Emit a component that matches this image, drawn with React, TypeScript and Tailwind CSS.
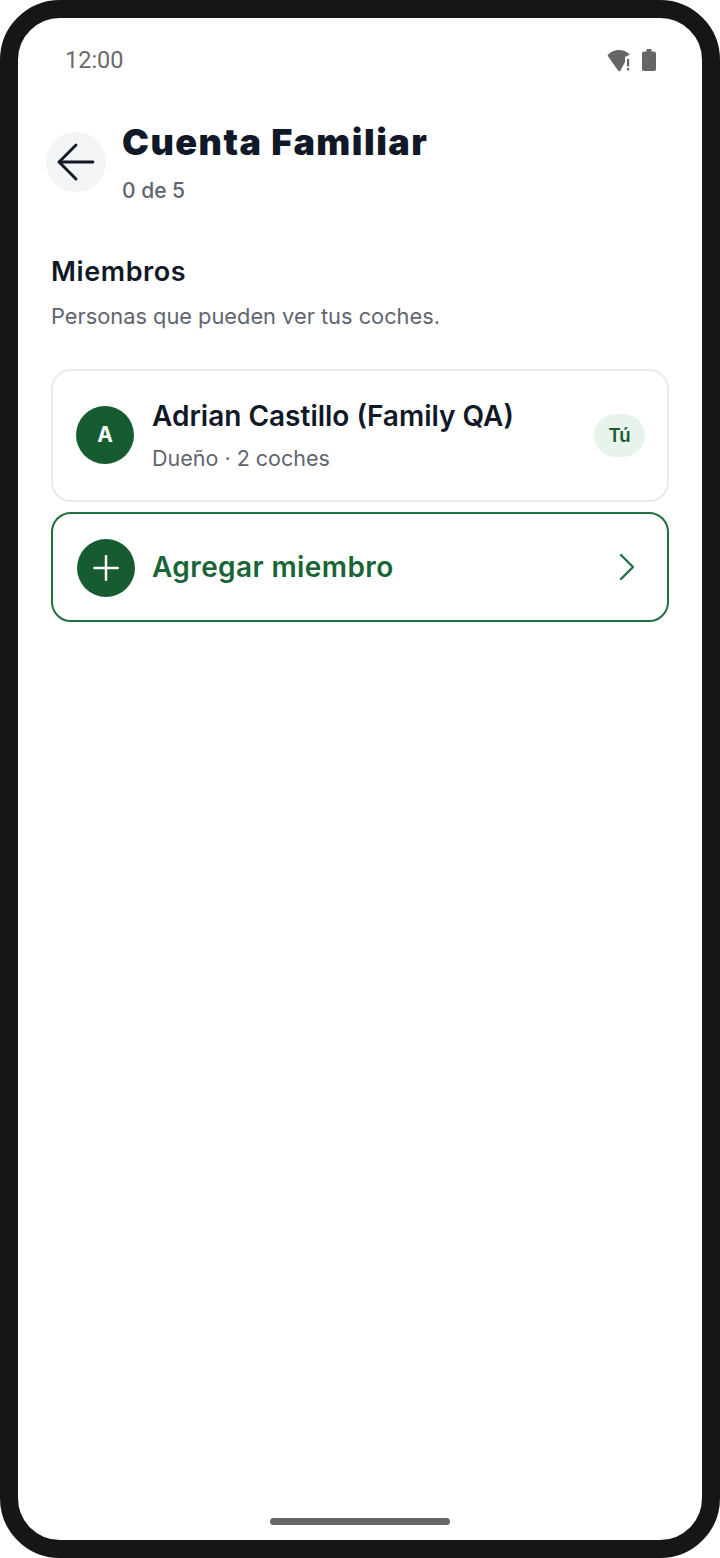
import { ArrowLeft, ChevronRight, Plus } from "lucide-react";

const sans = "font-['Inter','Noto_Sans',sans-serif]";

function StatusBar() {
  return (
    <div className="flex items-center justify-between h-[28px] pl-[47px] pr-[46px] mt-[28px]">
      <span className="font-['Roboto',sans-serif] text-[23.5px] leading-[28px] text-[#6b6b6b]">12:00</span>
      <div className="flex items-center gap-[9px]">
        <svg width="26" height="24" viewBox="0 0 26 24">
          <path d="M0.5 7.5C3.5 3.5 8 2 12 2c4 0 7.500 1.300 11 4.500l-5 2.500v5l-4.500 8.500a1.500 1.500 0 0 1-2.500 0Z" fill="#666666" />
          <rect x="20" y="11" width="2.200" height="7.500" fill="#666666" />
          <rect x="20" y="20" width="2.200" height="2.500" fill="#666666" />
        </svg>
        <svg width="14" height="22" viewBox="0 0 14 22">
          <path d="M4.500 0h5v2.500H12a2 2 0 0 1 2 2V20a2 2 0 0 1-2 2H2a2 2 0 0 1-2-2V4.500a2 2 0 0 1 2-2h2.500Z" fill="#666666" />
        </svg>
      </div>
    </div>
  );
}

export default function App() {
  return (
    <div className={`w-[720px] h-[1558px] bg-white ${sans}`}>
      <div className="w-full h-full border-[18px] border-[#151616] rounded-[60px] bg-white flex flex-col">
        <StatusBar />

        {/* Header */}
        <div className="flex items-start pl-[28px] mt-[45px]">
          <div className="w-[60px] h-[60px] mt-[13px] rounded-full bg-[#f3f4f6] flex items-center justify-center shrink-0">
            <ArrowLeft size={58} strokeWidth={1.200} className="text-[#111827]" />
          </div>
          <div className="ml-[16px]">
            <h1 className="text-[36px] leading-[46px] font-black text-[#111827] tracking-[1.5px]">Cuenta Familiar</h1>
            <p className="mt-[14px] text-[21px] leading-[24px] font-medium text-[#5f6570]">0 de 5</p>
          </div>
        </div>

        {/* Members */}
        <div className="px-[33px] mt-[52px]">
          <h2 className="text-[27px] leading-[34px] font-semibold text-[#111827] tracking-[0.6px]">Miembros</h2>
          <p className="mt-[13px] text-[21.800px] leading-[28px] text-[#5f6570]">Personas que pueden ver tus coches.</p>

          <div className="mt-[39px] h-[133px] rounded-[20px] border-2 border-[#e9eaec] flex items-center pl-[23px] pr-[22px]">
            <div className="w-[58px] h-[58px] mb-[2px] rounded-full bg-[#165c30] flex items-center justify-center text-white text-[21px] font-bold shrink-0">A</div>
            <div className="ml-[18px] flex-1 mb-[2px]">
              <div className="text-[28px] leading-[36px] font-semibold text-[#111827]">Adrian Castillo (Family QA)</div>
              <div className="mt-[10px] text-[21.500px] leading-[28px] text-[#5f6570]">Dueño · 2 coches</div>
            </div>
            <div className="w-[51px] h-[43px] rounded-full bg-[#e8f3ec] flex items-center justify-center text-[18.500px] font-semibold text-[#165c30]">Tú</div>
          </div>

          <div className="mt-[10px] h-[110px] rounded-[20px] border-2 border-[#1f7040] flex items-center pl-[24px] pr-[16px]">
            <div className="w-[58px] h-[58px] mt-[2px] rounded-full bg-[#165c30] flex items-center justify-center shrink-0">
              <Plus size={40} strokeWidth={1.500} className="text-white" />
            </div>
            <div className="ml-[17px] flex-1 text-[28px] leading-[36px] font-semibold tracking-[0.4px] text-[#1a6537]">Agregar miembro</div>
            <ChevronRight size={48} strokeWidth={1.150} className="text-[#1f7040]" />
          </div>
        </div>

        <div className="mt-auto mb-[15px] mx-auto w-[180px] h-[7px] rounded-full bg-[#666666]" />
      </div>
    </div>
  );
}
